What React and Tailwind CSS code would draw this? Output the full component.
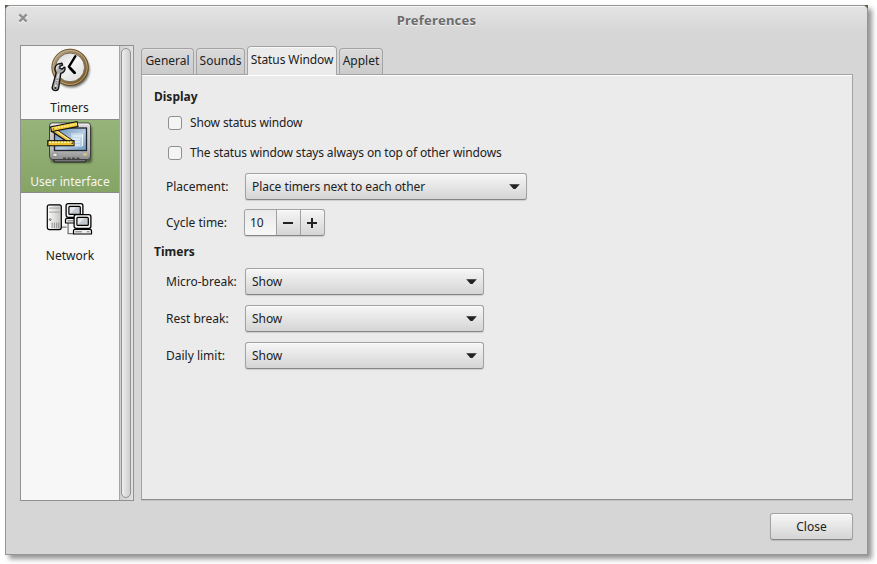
function TimersIcon() {
  return (
    <svg width="48" height="48" viewBox="0 0 48 48">
      <defs>
        <linearGradient id="ring" x1="0" y1="0" x2="1" y2="1">
          <stop offset="0" stopColor="#b9aa92" />
          <stop offset="0.45" stopColor="#9a7f55" />
          <stop offset="1" stopColor="#6b4a17" />
        </linearGradient>
        <linearGradient id="face" x1="0" y1="0" x2="0.6" y2="1">
          <stop offset="0" stopColor="#d4d4d4" />
          <stop offset="0.5" stopColor="#f6f6f6" />
          <stop offset="1" stopColor="#e2e2e2" />
        </linearGradient>
        <filter id="soft" x="-20%" y="-20%" width="150%" height="150%">
          <feGaussianBlur stdDeviation="1.1" />
        </filter>
      </defs>
      <circle cx="25.6" cy="23.6" r="18" fill="#000" opacity="0.55" filter="url(#soft)" />
      <circle cx="24.1" cy="21.4" r="18.6" fill="url(#ring)" />
      <circle cx="24.1" cy="21.4" r="18.2" fill="none" stroke="#5b431c" strokeWidth="0.7" />
      <circle cx="24.1" cy="21.4" r="17" fill="none" stroke="#cdbb98" strokeWidth="1" opacity="0.7" />
      <circle cx="24.1" cy="21.4" r="14.4" fill="url(#face)" stroke="#6f6149" strokeWidth="0.9" />
      <path d="M29.4 10.2 L22.8 20.8 L28.8 27" fill="none" stroke="#000" strokeWidth="2.3" strokeLinecap="round" strokeLinejoin="round" />
      <path d="M24.4 22.4 L28.4 26.6" stroke="#000" strokeWidth="2.8" strokeLinecap="round" />
      <g transform="translate(-1 0.6)">
        <path
          d="M13.4 17.4 L17 16.6 L17.6 18.6 L15 19.6 L14.8 21.6 L17 22.6 L19 20.6 L20 20.8 C20.2 23.8 18.6 26.2 15.8 26.8 L13.6 41.6 C13 45 7 44.8 7.2 40.8 L11.2 26.2 C8.8 23 9.6 18.8 13.4 17.4 Z"
          fill="#a9a9a9" stroke="#151515" strokeWidth="1.4" strokeLinejoin="round"
        />
        <path d="M13.6 27 L10.6 40" stroke="#e8e8e8" strokeWidth="1.5" />
        <path d="M12 23 C11.4 21 12.2 19 14 18.4" fill="none" stroke="#efefef" strokeWidth="1.1" />
        <path d="M12.4 32 L11.2 38" stroke="#555" strokeWidth="1" strokeDasharray="1.4 1" />
        <circle cx="10.4" cy="41.4" r="1.1" fill="#222" />
      </g>
    </svg>
  );
}

function InterfaceIcon() {
  return (
    <svg width="48" height="48" viewBox="0 0 48 48">
      <defs>
        <linearGradient id="shell" x1="0" y1="0" x2="0" y2="1">
          <stop offset="0" stopColor="#d8d8d8" />
          <stop offset="0.7" stopColor="#bcbcbc" />
          <stop offset="1" stopColor="#8c8c8c" />
        </linearGradient>
        <linearGradient id="screen" x1="0" y1="0" x2="1" y2="1">
          <stop offset="0" stopColor="#5f89b5" />
          <stop offset="0.55" stopColor="#b7cde2" />
          <stop offset="1" stopColor="#6d96c0" />
        </linearGradient>
        <filter id="soft2" x="-20%" y="-20%" width="150%" height="150%">
          <feGaussianBlur stdDeviation="1" />
        </filter>
      </defs>
      <rect x="5" y="6" width="41" height="37" rx="3" fill="#000" opacity="0.45" filter="url(#soft2)" />
      <path d="M7 37 H41 L39.5 42 H8.5 Z" fill="#777" stroke="#222" />
      <path d="M6 3 H42 Q44.5 3 44.5 5.5 V36 Q44.5 39.5 41.5 39.5 H6.5 Q3.5 39.5 3.5 36 V5.5 Q3.5 3 6 3 Z" fill="url(#shell)" stroke="#3f3f3f" />
      <path d="M5.5 4.2 H43" stroke="#f5f5f5" />
      <rect x="8.5" y="8" width="32" height="22.5" fill="url(#screen)" stroke="#1d242c" strokeWidth="1.3" />
      <path d="M25 13 H36 V27 H25 Z" fill="#e3edf5" opacity="0.45" />
      <path d="M26.5 16 H37 M26.5 19 H34 M26.5 22 H34 M26.5 25 H34 M36.5 14 V26" stroke="#eff6fb" strokeWidth="1.1" />
      <rect x="7" y="33.2" width="4" height="3" fill="#eee" stroke="#777" strokeWidth="0.6" />
      <path d="M37 34.5 H41" stroke="#d6c87c" strokeWidth="2" />
      <path d="M17 38.2 H34" stroke="#4b4b4b" strokeWidth="1.5" strokeDasharray="3 1.5" />
      <path d="M6 9.2 L27 23.4" stroke="#111" strokeWidth="5.2" />
      <path d="M7 9.4 L27 23" stroke="#e7b93a" strokeWidth="3.2" />
      <path d="M8 9.4 L27 22.3" stroke="#fdf0a0" strokeWidth="1.1" />
      <path d="M4.5 9.4 L32 4" stroke="#111" strokeWidth="6" />
      <path d="M5.6 9.2 L31 4.2" stroke="#f1c62f" strokeWidth="3.8" />
      <path d="M6 8.7 L31 3.8" stroke="#fff5a0" strokeWidth="1.5" strokeDasharray="2 1" />
      <path d="M1.2 23.2 H28.6" stroke="#111" strokeWidth="6.2" />
      <path d="M2.4 23.3 H27.6" stroke="#efc32f" strokeWidth="3.9" />
      <path d="M3 22.3 H27" stroke="#fff6a5" strokeWidth="1.5" strokeDasharray="2 1" />
      <circle cx="26.3" cy="23.2" r="0.9" fill="#6c4a08" />
      <circle cx="7.3" cy="9" r="0.8" fill="#6c4a08" />
    </svg>
  );
}

function Computer({ x, y }) {
  return (
    <g transform={`translate(${x} ${y})`}>
      <rect x="1.2" y="0.9" width="16.8" height="13.6" rx="2" fill="#f4f4f2" stroke="#000" strokeWidth="1.3" />
      <rect x="4" y="3.6" width="11.4" height="8" rx="1" fill="#c2c8ce" stroke="#000" strokeWidth="1.2" />
      <path d="M5 10.6 L12 4.5 H5 Z" fill="#e5e9ec" />
      <path d="M1.2 15.6 H18 L18.6 17 V20.2 H0.6 V17 Z" fill="#eeeeec" stroke="#000" strokeWidth="1.2" strokeLinejoin="round" />
      <path d="M2.5 18 H9 M14 18 H16.5" stroke="#777" strokeWidth="1" />
    </g>
  );
}

function NetworkIcon() {
  return (
    <svg width="48" height="48" viewBox="0 0 48 48">
      <defs>
        <linearGradient id="tower" x1="0" y1="0" x2="1" y2="0">
          <stop offset="0" stopColor="#fdfdfd" />
          <stop offset="1" stopColor="#c3c3c1" />
        </linearGradient>
      </defs>
      <g transform="translate(-0.4 1.6)">
        <path d="M15 31.5 H21 M22.5 26 V38 H29" fill="none" stroke="#777" strokeWidth="1.3" />
        <rect x="1.7" y="9.2" width="14" height="24.8" rx="2" fill="url(#tower)" stroke="#000" strokeWidth="1.2" />
        <path d="M3.5 12.5 H14 M3.5 16.5 H14" stroke="#9b9b9b" strokeWidth="0.9" />
        <path d="M6.5 27 V32.5 M8.8 27 V32.5 M11.1 27 V32.5 M13.2 27 V32.5" stroke="#888" strokeWidth="0.9" />
        <circle cx="4.6" cy="24" r="0.9" fill="#fff" stroke="#333" strokeWidth="0.7" />
        <Computer x={19.3} y={7.2} />
        <Computer x={27.3} y={18.2} />
      </g>
    </svg>
  );
}

function SidebarItem({ icon, label, selected, className = "" }) {
  return (
    <div
      className={
        "flex h-[74px] flex-col items-center " +
        (selected
          ? "border-y border-[#8b8b8b] bg-linear-to-b from-[#97b57b] to-[#86a465] text-[#f5f5f5] "
          : "text-[#212121] ") +
        className
      }
    >
      {icon}
      <span className="mt-[5px] leading-[18px]">{label}</span>
    </div>
  );
}

function Tab({ label, className }) {
  return (
    <div className={"flex h-[26px] items-start justify-center rounded-t-[4px] border border-b-0 border-[#a3a3a3] bg-linear-to-b from-[#dadada] to-[#cbcbcb] pt-[3px] shadow-[inset_0_1px_0_#e4e4e4] " + className}>
      {label}
    </div>
  );
}

const buttonLook =
  "rounded-[3px] border border-[#a2a2a2] border-b-[#858585] bg-linear-to-b from-[#f6f6f6] to-[#d5d5d5] shadow-[0_1px_1px_rgba(0,0,0,0.13),inset_0_1px_0_#fbfbfb] ";

function Combo({ value, className }) {
  return (
    <div className={buttonLook + "flex h-[27px] items-center justify-between pl-[6px] pr-[6px] " + className}>
      <span className="tracking-[-0.06px]">{value}</span>
      <svg width="11" height="6" viewBox="0 0 11 6">
        <path d="M0.2 0.3 H10.8 L6.5 5 H4.5 Z" fill="#212121" />
      </svg>
    </div>
  );
}

function CheckRow({ label, className }) {
  return (
    <div className={"flex h-[18px] items-center pl-[14px] " + className}>
      <span className="h-[14px] w-[14px] rounded-[3px] border border-[#8f8f8f] bg-[#f4f4f4]" />
      <span className="ml-2 tracking-[-0.135px]">{label}</span>
    </div>
  );
}

function Field({ label, className, children }) {
  return (
    <div className={"flex h-[27px] items-center pl-3 " + className}>
      <span className="w-[79px] shrink-0">{label}</span>
      {children}
    </div>
  );
}

export default function App() {
  return (
    <div className="h-[564px] w-[877px] overflow-hidden bg-white pl-[5px] pt-[5px] font-['Noto_Sans',sans-serif] text-[12px] leading-[18px] whitespace-nowrap text-[#212121]">
      <div className="h-[550px] w-[863px] bg-[#4a6339] shadow-[4px_4px_5px_rgba(0,0,0,0.42)]">
        <div className="h-full w-full rounded-t-[5px] border border-[#969696] bg-[#d6d6d6] bg-[linear-gradient(to_bottom,#e4e4e4,#d6d6d6_26px)] shadow-[inset_0_1px_0_#f6f6f6]">
          <header className="flex h-[39px] items-start pt-[4px]">
            <svg className="mt-[3px] ml-[12px]" width="10" height="11" viewBox="0 0 10 11">
              <path d="M1.4 2.4 L8.6 9.6 M8.6 2.4 L1.4 9.6" stroke="#fafafa" strokeWidth="2.3" />
              <path d="M1.4 1.4 L8.6 8.6 M8.6 1.4 L1.4 8.6" stroke="#8f8f8f" strokeWidth="2.4" />
            </svg>
            <h1 className="mr-[22px] grow text-center text-[13px] leading-[20px] font-bold tracking-[0.25px] text-[#6c6c6c] [text-shadow:0_1px_0_#f4f4f4]">
              Preferences
            </h1>
          </header>
          <div className="ml-[14px] flex h-[456px] gap-[7px]">
            <aside className="flex w-[114px] border border-[#919191] bg-[#f7f7f7]">
              <div className="w-[98px]">
                <div className="h-[73px] overflow-hidden">
                  <SidebarItem icon={<TimersIcon />} label="Timers" className="pr-px" />
                </div>
                <SidebarItem icon={<InterfaceIcon />} label="User interface" selected />
                <SidebarItem icon={<NetworkIcon />} label="Network" className="pt-px" />
              </div>
              <div className="flex grow border-l border-[#a5a5a5] bg-linear-to-r from-[#d0d0d0] to-[#e2e2e2] py-[2px] pl-px">
                <div className="w-[10px] rounded-full border border-[#929292] bg-linear-to-r from-[#eeeeee] to-[#cecece]" />
              </div>
            </aside>
            <main className="flex w-[712px] flex-col pb-px">
              <div className="relative z-10 -mb-px flex h-[30px] items-end gap-[2px]">
                <Tab label="General" className="mb-px w-[53px]" />
                <Tab label="Sounds" className="mb-px w-[49px]" />
                <div className="flex h-[29px] w-[90px] justify-center rounded-t-[4px] border border-b-0 border-[#a3a3a3] bg-[#ebebeb] pt-[4px] tracking-[-0.08px] shadow-[inset_0_1px_0_#f8f8f8]">
                  Status Window
                </div>
                <Tab label="Applet" className="mb-px w-[44px]" />
              </div>
              <section className="grow border border-[#a3a3a3] border-b-[#8c8c8c] bg-[#ebebeb] pt-[13px] pl-[12px] shadow-[inset_0_1px_0_#ffffff,0_1px_0_#c2c2c2]">
                <h2 className="h-[18px] font-bold">Display</h2>
                <CheckRow label="Show status window" className="mt-[8px]" />
                <CheckRow label="The status window stays always on top of other windows" className="mt-[12px]" />
                <Field label="Placement:" className="mt-[11px]">
                  <Combo value="Place timers next to each other" className="w-[282px]" />
                </Field>
                <Field label="Cycle time:" className="mt-[9px]">
                  <div className={buttonLook + "-ml-px flex h-[27px] w-[81px] overflow-hidden"}>
                    <span className="flex w-[32px] items-center border-r border-[#a0a0a0] bg-linear-to-b from-[#e9e9e9] to-[#f7f7f7] pl-[5px]">10</span>
                    <span className="flex w-[24px] items-center justify-center border-r border-[#a0a0a0] pr-px">
                      <svg width="10" height="10" viewBox="0 0 10 10"><path d="M0 5 H10" stroke="#212121" strokeWidth="2" /></svg>
                    </span>
                    <span className="flex grow items-center justify-center pr-[2px]">
                      <svg width="10" height="10" viewBox="0 0 10 10"><path d="M0 5 H10 M5 0 V10" stroke="#212121" strokeWidth="2" /></svg>
                    </span>
                  </div>
                </Field>
                <h2 className="mt-[7px] h-[18px] font-bold">Timers</h2>
                <Field label="Micro-break:" className="mt-[7px]">
                  <Combo value="Show" className="w-[239px]" />
                </Field>
                <Field label="Rest break:" className="mt-[10px]">
                  <Combo value="Show" className="w-[239px]" />
                </Field>
                <Field label="Daily limit:" className="mt-[10px]">
                  <Combo value="Show" className="w-[239px]" />
                </Field>
              </section>
            </main>
          </div>
          <footer className="mt-[12px] mr-[14px] flex justify-end">
            <button className={buttonLook + "h-[27px] w-[83px]"}>Close</button>
          </footer>
        </div>
      </div>
    </div>
  );
}
